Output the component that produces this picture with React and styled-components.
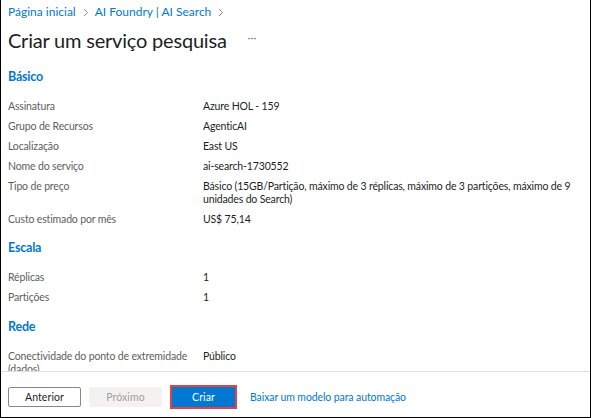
import React from "react";
import styled, { createGlobalStyle } from "styled-components";

const Global = createGlobalStyle`
  html, body { margin: 0; padding: 0; background: #fff; }
  body { font-family: Lato, "Noto Sans", sans-serif; }
  * { box-sizing: border-box; }
`;

const Frame = styled.div`
  width: 591px;
  height: 418px;
  border-left: 1px solid #000;
  border-right: 1px solid #000;
  border-bottom: 1px solid #000;
  display: flex;
  flex-direction: column;
  background: #fff;
`;

const Scroll = styled.div`
  flex: 1 1 0;
  overflow: hidden;
  padding: 4px 7px 0;
  min-height: 0;
`;

const Breadcrumb = styled.nav`
  display: flex;
  align-items: center;
  height: 16px;
  font-size: 12px;
  line-height: 16px;
  color: #0078d4;
`;

const Crumb = styled.a`
  color: #0078d4;
  text-decoration: none;
`;

const Chevron = styled.span`
  display: inline-flex;
  margin: 0 6px 0 7px;
`;

const TitleRow = styled.div`
  display: flex;
  align-items: center;
  margin-top: 6px;
  height: 28px;
`;

const Title = styled.h1`
  margin: 0;
  font-size: 20px;
  font-weight: 400;
  line-height: 28px;
  letter-spacing: -0.2px;
  color: #201f1e;
`;

const More = styled.span`
  margin-left: 21px;
  font-size: 10px;
  color: #605e5c;
  letter-spacing: 0.5px;
  position: relative;
  top: -3px;
`;

const SectionTitle = styled.h2`
  margin: ${(p) => p.$top}px 0 9px;
  font-size: 12.5px;
  font-weight: 700;
  line-height: 20px;
  letter-spacing: -0.2px;
  color: #0078d4;
`;

const Row = styled.div`
  display: grid;
  grid-template-columns: 195px 1fr;
  padding: 4px 0 3px;
  font-size: 10.5px;
  line-height: 13px;
  letter-spacing: -0.15px;
`;

const Label = styled.div`
  color: #605e5c;
  padding-right: 6px;
`;

const Value = styled.div`
  color: #201f1e;
`;

const Footer = styled.div`
  flex: 0 0 46px;
  height: 46px;
  border-top: 1px solid #e1dfdd;
  display: flex;
  align-items: center;
  padding: 4px 7px 0;
`;

const Button = styled.button`
  height: 20px;
  width: ${(p) => p.$w || 73}px;
  padding: 0;
  font-family: inherit;
  font-size: 10.5px;
  letter-spacing: 0.1px;
  line-height: 18px;
  border-radius: 2px;
  cursor: pointer;
  border: 1px solid ${(p) => (p.$disabled ? "#f3f2f1" : p.$primary ? "#0078d4" : "#8a8886")};
  background: ${(p) => (p.$disabled ? "#f3f2f1" : p.$primary ? "#0078d4" : "#fff")};
  color: ${(p) => (p.$disabled ? "#a19f9d" : p.$primary ? "#fff" : "#201f1e")};
  margin-right: ${(p) => p.$mr || 0}px;
`;

const Highlight = styled.span`
  display: inline-flex;
  padding: 0;
  border: 2px solid #e8403f;
  margin-right: 13px;
`;

const PrimaryButton = styled(Button)`
  border-radius: 0;
  margin: 0;
`;

const Link = styled.a`
  font-size: 10.5px;
  letter-spacing: -0.1px;
  color: #0078d4;
  text-decoration: none;
`;

const ChevronIcon = () => (
  <svg width="6" height="9" viewBox="0 0 6 9">
    <path d="M1 1l3.5 3.5L1 8" fill="none" stroke="#8a8886" strokeWidth="1" />
  </svg>
);

const basico = [
  ["Assinatura", "Azure HOL - 159"],
  ["Grupo de Recursos", "AgenticAI"],
  ["Localização", "East US"],
  ["Nome do serviço", "ai-search-1730552"],
  [
    "Tipo de preço",
    "Básico (15GB/Partição, máximo de 3 réplicas, máximo de 3 partições, máximo de 9 unidades do Search)",
  ],
  ["Custo estimado por mês", "US$ 75,14"],
];

const escala = [
  ["Réplicas", "1"],
  ["Partições", "1"],
];

const rede = [["Conectividade do ponto de extremidade (dados)", "Público"]];

const Rows = ({ items }) =>
  items.map(([l, v]) => (
    <Row key={l}>
      <Label>{l}</Label>
      <Value>{v}</Value>
    </Row>
  ));

export default function App() {
  return (
    <>
      <Global />
      <Frame>
        <Scroll>
          <Breadcrumb>
            <Crumb>Página inicial</Crumb>
            <Chevron>
              <ChevronIcon />
            </Chevron>
            <Crumb>AI Foundry | AI Search</Crumb>
            <Chevron>
              <ChevronIcon />
            </Chevron>
          </Breadcrumb>
          <TitleRow>
            <Title>Criar um serviço pesquisa</Title>
            <More>···</More>
          </TitleRow>
          <SectionTitle $top={13}>Básico</SectionTitle>
          <Rows items={basico} />
          <SectionTitle $top={9}>Escala</SectionTitle>
          <Rows items={escala} />
          <SectionTitle $top={10}>Rede</SectionTitle>
          <Rows items={rede} />
        </Scroll>
        <Footer>
          <Button $mr={8}>Anterior</Button>
          <Button $disabled $mr={8}>Próximo</Button>
          <Highlight>
            <PrimaryButton $primary $w={63}>Criar</PrimaryButton>
          </Highlight>
          <Link>Baixar um modelo para automação</Link>
        </Footer>
      </Frame>
    </>
  );
}
